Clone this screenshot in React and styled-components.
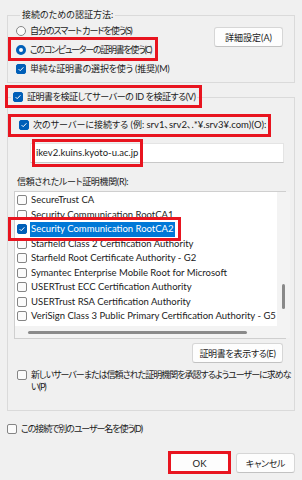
import React from 'react';
import styled, { createGlobalStyle } from 'styled-components';

const GlobalStyle = createGlobalStyle`
  html, body {
    margin: 0;
    padding: 0;
    background: #f0f0f0;
  }
  body {
    font-family: Lato, "Noto Sans CJK JP", sans-serif;
    font-size: 9.5px;
    color: #1b1b1b;
    font-feature-settings: "palt" 1;
  }
`;

const ACCENT = '#005fb8';
const RED = '#e8141f';

const Dialog = styled.div`
  width: 302px;
  height: 480px;
  box-sizing: border-box;
  padding: 8px 7px 0 7px;
  display: flex;
  flex-direction: column;
  overflow: hidden;
`;

// Japanese text runs a bit tighter than the latin font
const Jp = styled.span`
  font-size: 9px;
  letter-spacing: ${(p) => p.$ls || 0}px;
`;

const Group = styled.fieldset`
  margin: ${(p) => p.$top || 0}px 0 0 0;
  border: 1px solid #dadada;
  min-width: 0;
  display: flex;
  flex-direction: ${(p) => (p.$row ? 'row' : 'column')};
  justify-content: space-between;
  padding: ${(p) => p.$pad};
`;

const Legend = styled.legend`
  margin-left: ${(p) => p.$left || 4}px;
  padding: 0 2px;
  line-height: 14px;
`;

// red annotation frame drawn over the content
const Marked = styled.div`
  position: relative;
  display: ${(p) => (p.$inline ? 'inline-block' : 'block')};
  align-self: flex-start;
  margin: ${(p) => p.$m || 0};
  &::after {
    content: '';
    position: absolute;
    top: ${(p) => -p.$t}px;
    right: ${(p) => -p.$r}px;
    bottom: ${(p) => -p.$b}px;
    left: ${(p) => -p.$l}px;
    border: 3px solid ${RED};
    pointer-events: none;
  }
`;

const Options = styled.div`
  display: flex;
  flex-direction: column;
  gap: 5px;
  padding-top: 2px;
`;

const Option = styled.div`
  display: inline-flex;
  align-items: ${(p) => (p.$top ? 'flex-start' : 'center')};
  gap: 4px;
  min-height: 14px;
  line-height: ${(p) => p.$lh || 14}px;
  margin: ${(p) => p.$m || 0};
  align-self: flex-start;
  white-space: nowrap;
`;

const BoxShape = styled.span`
  flex: none;
  box-sizing: border-box;
  width: 10px;
  height: 10px;
  border-radius: 2px;
  border: 1px solid ${(p) => (p.$checked ? ACCENT : '#858585')};
  background: ${(p) => (p.$checked ? ACCENT : '#fbfbfb')};
  display: flex;
  align-items: center;
  justify-content: center;
  margin-top: ${(p) => p.$mt || 0}px;
`;

const RadioShape = styled.span`
  flex: none;
  box-sizing: border-box;
  width: 10px;
  height: 10px;
  border-radius: 50%;
  border: ${(p) => (p.$checked ? `3px solid ${ACCENT}` : '1px solid #858585')};
  background: #fbfbfb;
`;

const Check = ({ checked, mt }) => (
  <BoxShape $checked={checked} $mt={mt}>
    {checked && (
      <svg width="8" height="8" viewBox="0 0 8 8">
        <path d="M1.6 4.1 L3.2 5.7 L6.4 2.3" fill="none" stroke="#fff" strokeWidth="1" />
      </svg>
    )}
  </BoxShape>
);

const Button = styled.button`
  box-sizing: border-box;
  width: ${(p) => p.$w}px;
  height: 20px;
  padding: 0;
  margin: ${(p) => p.$m || 0};
  font: inherit;
  color: #1b1b1b;
  background: #fdfdfd;
  border: 1px solid #d6d6d6;
  border-bottom-color: #c2c2c2;
  border-radius: 3px;
  align-self: ${(p) => p.$align || 'auto'};
  flex: none;
`;

const TextBox = styled.div`
  box-sizing: border-box;
  margin: 11px 0 0 22px;
  width: 254px;
  height: 20px;
  background: #ffffff;
  border: 1px solid #e4e4e4;
  border-bottom-color: #c8c8c8;
  padding-left: 5px;
  line-height: 18px;
`;

const Caption = styled.div`
  margin: 12px 0 0 9px;
  line-height: 14px;
`;

const List = styled.div`
  margin: 2px 0 0 6px;
  width: 272px;
  height: 148px;
  box-sizing: border-box;
  border: 1px solid #cfcfcf;
  display: grid;
  grid-template-columns: 1fr 13px;
  grid-template-rows: 1fr 12px;
`;

const Rows = styled.div`
  background: #ffffff;
  padding: 1px 0 0 2px;
`;

const Row = styled.div`
  height: 14.5px;
  display: flex;
  align-items: center;
`;

const RowItem = styled.div`
  display: inline-flex;
  align-items: center;
  gap: 3px;
  white-space: nowrap;
`;

const RowLabel = styled.span`
  line-height: 14.5px;
  padding: 0 1px;
  background: ${(p) => (p.$selected ? '#0078d7' : 'transparent')};
  color: ${(p) => (p.$selected ? '#ffffff' : '#1b1b1b')};
`;

const VTrack = styled.div`
  background: #f3f3f3;
  padding: 92px 0 0 5px;
`;

const VThumb = styled.div`
  width: 3px;
  height: 25px;
  border-radius: 2px;
  background: #8a8a8a;
`;

const HTrack = styled.div`
  background: #f3f3f3;
  padding: 5px 0 0 13px;
`;

const HThumb = styled.div`
  width: 219px;
  height: 3px;
  border-radius: 2px;
  background: #8a8a8a;
`;

const Corner = styled.div`
  background: #f3f3f3;
`;

const Footer = styled.div`
  display: flex;
  justify-content: flex-end;
  gap: 7px;
  margin-top: 17px;
`;

const certs = [
  'SecureTrust CA',
  'Security Communication RootCA1',
  'Security Communication RootCA2',
  'Starfield Class 2 Certification Authority',
  'Starfield Root Certificate Authority - G2',
  'Symantec Enterprise Mobile Root for Microsoft',
  'USERTrust ECC Certification Authority',
  'USERTrust RSA Certification Authority',
  'VeriSign Class 3 Public Primary Certification Authority - G5',
];

const App = () => {
  return (
    <>
      <GlobalStyle />
      <Dialog>
        <Group $row $pad="0 11px 6px 8px">
          <Legend>
            <Jp>接続のための認証方法:</Jp>
          </Legend>
          <Options>
            <Option>
              <RadioShape />
              <Jp $ls={-1.05}>自分のスマート カードを使う(S)</Jp>
            </Option>
            <Marked $t={6} $r={7} $b={4} $l={8}>
              <Option>
                <RadioShape $checked />
                <Jp $ls={-1.3}>このコンピューターの証明書を使う(C)</Jp>
              </Option>
            </Marked>
            <Option>
              <Check checked />
              <Jp $ls={-0.2}>単純な証明書の選択を使う (推奨)(M)</Jp>
            </Option>
          </Options>
          <Button $w={69} $m="5px 0 0 0">
            <Jp>詳細設定(A)</Jp>
          </Button>
        </Group>

        <Group $top={7} $pad="0 0 18px 0">
          <Legend $left={3}>
            <Marked $t={5} $r={7} $b={3} $l={8}>
              <Option>
                <Check checked />
                <Jp $ls={-0.45}>証明書を検証してサーバーの ID を検証する(V)</Jp>
              </Option>
            </Marked>
          </Legend>

          <Marked $t={4} $r={5} $b={5} $l={11} $m="13px 0 0 11px">
            <Option>
              <Check checked />
              <span>
                <Jp>次のサーバーに接続する (例: </Jp>srv1<Jp>、</Jp>srv2<Jp>、</Jp>.*¥.srv3¥.com)(O):
              </span>
            </Option>
          </Marked>

          <TextBox>
            <Marked $inline $t={5} $r={5} $b={5} $l={4}>
              ikev2.kuins.kyoto-u.ac.jp
            </Marked>
          </TextBox>

          <Caption>
            <Jp $ls={-0.33}>信頼されたルート証明機関(R):</Jp>
          </Caption>

          <List>
            <Rows>
              {certs.map((name, i) => {
                const selected = i === 2;
                const item = (
                  <RowItem>
                    <Check checked={selected} />
                    <RowLabel $selected={selected}>{name}</RowLabel>
                  </RowItem>
                );
                return (
                  <Row key={name}>
                    {selected ? (
                      <Marked $t={5} $r={6} $b={4} $l={9}>
                        {item}
                      </Marked>
                    ) : (
                      item
                    )}
                  </Row>
                );
              })}
            </Rows>
            <VTrack>
              <VThumb />
            </VTrack>
            <HTrack>
              <HThumb />
            </HTrack>
            <Corner />
          </List>

          <Button $w={91} $m="4px 11px 0 0" $align="flex-end">
            <Jp $ls={-0.3}>証明書を表示する(E)</Jp>
          </Button>

          <Option $top $lh={11.5} $m="6px 0 0 9px">
            <Check mt={1} />
            <Jp $ls={-1}>
              新しいサーバーまたは信頼された証明機関を承認するようユーザーに求めな
              <br />
              い(P)
            </Jp>
          </Option>
        </Group>

        <Option $m="11px 0 0 0">
          <Check />
          <Jp $ls={-1.1}>この接続で別のユーザー名を使う(D)</Jp>
        </Option>

        <Footer>
          <Marked $t={2} $r={2} $b={1} $l={2}>
            <Button $w={59}>OK</Button>
          </Marked>
          <Button $w={59}>
            <Jp $ls={-0.3}>キャンセル</Jp>
          </Button>
        </Footer>
      </Dialog>
    </>
  );
};

export default App;
